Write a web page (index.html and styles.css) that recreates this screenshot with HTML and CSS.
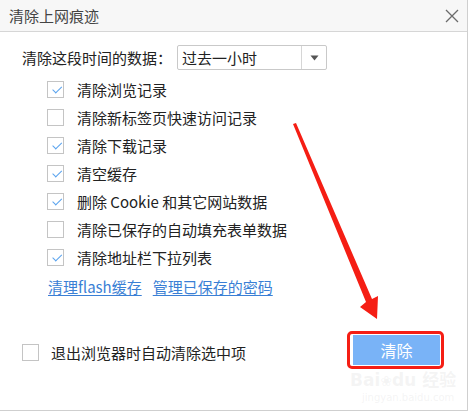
FILE: index.html
```html
<!DOCTYPE html>
<html lang="zh">
<head>
<meta charset="utf-8">
<link rel="stylesheet" href="styles.css">
</head>
<body>
<div class="dialog">
  <div class="header">
    <span class="title">清除上网痕迹</span>
    <svg class="close" width="14" height="14" viewBox="0 0 14 14"><path d="M1 1L13 13M13 1L1 13" stroke="#6b6b6b" stroke-width="1.3" fill="none"/></svg>
  </div>
  <div class="content">
    <div class="time-row">
      <span class="time-label">清除这段时间的数据：</span>
      <div class="select">
        <span class="select-text">过去一小时</span>
        <span class="select-btn"><svg width="9" height="6" viewBox="0 0 9 6"><path d="M0.5 0.5H8.5L4.5 5.5Z" fill="#555"/></svg></span>
      </div>
    </div>
    <ul class="options">
      <li class="opt"><span class="cb checked"></span>清除浏览记录</li>
      <li class="opt"><span class="cb"></span>清除新标签页快速访问记录</li>
      <li class="opt"><span class="cb checked"></span>清除下载记录</li>
      <li class="opt"><span class="cb checked"></span>清空缓存</li>
      <li class="opt"><span class="cb checked"></span>删除 Cookie 和其它网站数据</li>
      <li class="opt"><span class="cb"></span>清除已保存的自动填充表单数据</li>
      <li class="opt"><span class="cb checked"></span>清除地址栏下拉列表</li>
    </ul>
    <div class="links">
      <a class="link">清理flash缓存</a>
      <a class="link">管理已保存的密码</a>
    </div>
  </div>
  <div class="footer">
    <label class="opt auto"><span class="cb"></span>退出浏览器时自动清除选中项</label>
    <button class="clear-btn">清除</button>
  </div>
</div>
<svg class="arrow" width="470" height="412" viewBox="0 0 470 412"><polygon points="293,124 296,123 372,299 378,296 377,319 360,307 366,302" fill="#f51e14"/></svg>
<div class="watermark">
  <div class="wm1">Bai<span class="paw">❀</span>du 经验</div>
  <div class="wm2">jingyan.baidu.com</div>
</div>
</body>
</html>
```
FILE: styles.css
```css
html, body {
  margin: 0;
  padding: 0;
  background: #ffffff;
}
body {
  font-family: "Noto Sans CJK SC", "Noto Sans", sans-serif;
  color: #222;
  position: relative;
  width: 470px;
  height: 412px;
  overflow: hidden;
}
.dialog {
  width: 468px;
  height: 411px;
  box-sizing: border-box;
  border-right: 1px solid #cfcfcf;
  border-bottom: 1px solid #cfcfcf;
  display: flex;
  flex-direction: column;
}
.header {
  height: 32px;
  box-sizing: border-box;
  background: #f7f7f7;
  border-bottom: 1px solid #d6d6d6;
  display: flex;
  align-items: center;
  justify-content: space-between;
  padding: 0 8px 0 9px;
}
.title {
  font-size: 15px;
  color: #444;
}
.close {
  display: block;
  margin-top: 1px;
}
.content {
  padding: 13px 0 0 22px;
  flex: 1;
}
.time-row {
  display: flex;
  align-items: center;
  height: 25px;
  font-size: 15px;
}
.time-label {
  width: 155px;
}
.select {
  width: 150px;
  height: 25px;
  box-sizing: border-box;
  border: 1px solid #c9c9c9;
  border-radius: 2px;
  display: flex;
  align-items: center;
}
.select-text {
  flex: 1;
  padding-left: 4px;
  font-size: 15px;
}
.select-btn {
  width: 24px;
  height: 23px;
  border-left: 1px solid #d6d6d6;
  display: flex;
  align-items: center;
  justify-content: center;
}
.select-btn svg { display: block; }
.options {
  list-style: none;
  margin: 5px 0 0 0;
  padding: 0 0 0 25px;
}
.opt {
  display: flex;
  align-items: center;
  height: 28px;
  font-size: 15px;
  color: #222;
}
.cb {
  width: 17px;
  height: 17px;
  box-sizing: border-box;
  border: 1px solid #c4c4c4;
  margin-right: 13px;
  position: relative;
  flex: none;
}
.cb.checked::after {
  content: "";
  position: absolute;
  left: 4px;
  top: 2px;
  width: 8px;
  height: 4px;
  border-left: 1px solid #5aa3ee;
  border-bottom: 1px solid #5aa3ee;
  transform: rotate(-45deg) translate(-1px, 2px);
}
.links {
  display: flex;
  gap: 11px;
  padding-left: 26px;
  margin-top: 3px;
  height: 24px;
  align-items: center;
}
.link {
  font-size: 15px;
  color: #3a7fd5;
  text-decoration: underline;
  text-underline-offset: 2px;
}
.footer {
  display: flex;
  align-items: center;
  justify-content: space-between;
  padding: 0 27px 44px 22px;
}
.auto .cb {
  margin-right: 12px;
}
.clear-btn {
  width: 89px;
  height: 30px;
  margin-top: -4px;
  border: none;
  border-left: 2px solid #ffffff;
  background: #79b3f7;
  color: #ffffff;
  font-family: "Noto Sans CJK SC", sans-serif;
  font-size: 16px;
  outline: 3px solid #f51e14;
  outline-offset: 1px;
  border-radius: 1px;
  padding: 0;
}
.arrow {
  position: absolute;
  left: 0;
  top: 0;
  pointer-events: none;
}
.watermark {
  position: absolute;
  left: 350px;
  top: 370px;
  color: rgba(200, 200, 200, 0.2);
  font-family: "DejaVu Sans", "Noto Sans CJK SC", sans-serif;
  pointer-events: none;
}
.wm1 {
  font-size: 17px;
  font-weight: bold;
  line-height: 20px;
}
.paw { font-size: 14px; }
.wm2 {
  font-size: 10px;
  line-height: 14px;
  padding-left: 12px;
}
```
